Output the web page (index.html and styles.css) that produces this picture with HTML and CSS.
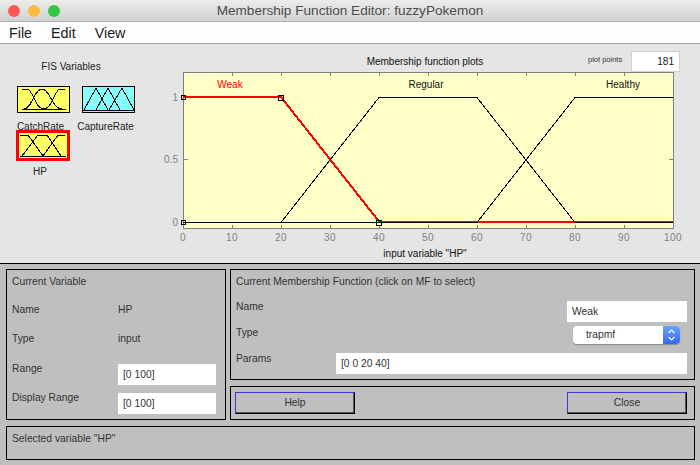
FILE: index.html
```html
<!DOCTYPE html>
<html lang="en">
<head>
	<meta charset="UTF-8">
	<title>Membership Function Editor: fuzzyPokemon</title>
	<link rel="stylesheet" href="styles.css">
</head>
<body>

<div class="titlebar">
	<div class="lights">
		<span class="light red"></span>
		<span class="light yellow"></span>
		<span class="light green"></span>
	</div>
	<div class="wintitle">Membership Function Editor: fuzzyPokemon</div>
</div>
<ul class="menubar">
	<li>File</li>
	<li>Edit</li>
	<li>View</li>
</ul>

<div class="top">
	<div class="fis">
		<div class="fis-title">FIS Variables</div>
		<div class="vars">
			<div class="tile">
				<svg class="icon yellow-icon" width="53" height="27" viewBox="0 0 51 25">
					<path class="thin crisp" d="M4 22H48M4 2H9C15 2 17 22 26 22M6 22C14 22 16 2 24 2C32 2 34 22 44 22M26 22C34 22 37 2 42 2H47"/>
				</svg>
				<div class="tile-name">CatchRate</div>
			</div>
			<div class="tile">
				<svg class="icon cyan-icon" width="53" height="27" viewBox="0 0 51 25">
					<path class="thin crisp" d="M0 23H51M1 23L13 1L25 23M13 23L25 1L37 23M26 23L39 1L51 23"/>
				</svg>
				<div class="tile-name">CaptureRate</div>
			</div>
			<div class="tile tile-hp">
				<svg class="icon yellow-icon selected" width="54" height="31" viewBox="0 0 48 25">
					<path class="thin crisp" d="M1 23H47M1 2H9L24 23M3 23L19 2H28L42 23M24 23L39 2H46"/>
				</svg>
				<div class="tile-name">HP</div>
			</div>
		</div>
	</div>

	<div class="plot">
		<div class="plot-head">
			<div class="plot-title">Membership function plots</div>
			<div class="points-label">plot points</div>
			<div class="points-box">181</div>
		</div>
		<svg class="chart" width="540" height="190" viewBox="160 70 540 190">
			<rect class="plot-bg" x="183.5" y="72.5" width="490" height="156"/>
			<path class="ticks" d="M232.5 73V76M281.5 73V76M330.5 73V76M379.5 73V76M428.5 73V76M477.5 73V76M526.5 73V76M575.5 73V76M624.5 73V76"/>
			<path class="ticks" d="M232.5 228V225M281.5 228V225M330.5 228V225M379.5 228V225M428.5 228V225M477.5 228V225M526.5 228V225M575.5 228V225M624.5 228V225"/>
			<path class="ticks" d="M184 97.5H188M184 159.5H188M184 222.5H188M673 97.5H669M673 159.5H669M673 222.5H669"/>

			<polyline class="mf-red" points="183,97 281,97 379,221.5 673,221.5"/>
			<polyline class="mf" points="281,222.5 379,97.5 477,97.5 575,222.5 673,222.5"/>
			<polyline class="mf" points="183,222.5 477,222.5 575,97.5 673,97.5"/>

			<rect class="handle" x="181.5" y="95.5" width="4" height="4"/>
			<rect class="handle" x="278.5" y="95" width="5" height="5"/>
			<rect class="handle" x="376.5" y="220.5" width="5" height="5"/>
			<rect class="handle" x="181.5" y="220.5" width="4" height="4"/>

			<text class="mf-name red-name" x="230" y="88">Weak</text>
			<text class="mf-name" x="426" y="88">Regular</text>
			<text class="mf-name" x="623" y="88">Healthy</text>

			<text class="y-num" x="178" y="101">1</text>
			<text class="y-num" x="178" y="163">0.5</text>
			<text class="y-num" x="178" y="226">0</text>

			<text class="x-num" x="183" y="241">0</text>
			<text class="x-num" x="232" y="241">10</text>
			<text class="x-num" x="281" y="241">20</text>
			<text class="x-num" x="330" y="241">30</text>
			<text class="x-num" x="379" y="241">40</text>
			<text class="x-num" x="428" y="241">50</text>
			<text class="x-num" x="477" y="241">60</text>
			<text class="x-num" x="526" y="241">70</text>
			<text class="x-num" x="575" y="241">80</text>
			<text class="x-num" x="624" y="241">90</text>
			<text class="x-num" x="673" y="241">100</text>

			<text class="mf-name" x="425" y="257">input variable "HP"</text>
		</svg>
	</div>
</div>

<div class="bottom">
	<div class="panel var-panel">
		<div class="var-row"><span>Current Variable</span></div>
		<div class="var-row"><span>Name</span><span>HP</span></div>
		<div class="var-row"><span>Type</span><span>input</span></div>
		<div class="var-row"><span class="low-label">Range</span><div class="field">[0 100]</div></div>
		<div class="var-row"><span class="low-label">Display Range</span><div class="field">[0 100]</div></div>
	</div>
	<div class="panel mf-panel">
		<div class="mf-row mf-head">Current Membership Function (click on MF to select)</div>
		<div class="mf-row name-row">
			<span>Name</span>
			<div class="field name-field">Weak</div>
		</div>
		<div class="mf-row type-row">
			<span>Type</span>
			<div class="select">
				<span class="select-text">trapmf</span>
				<span class="select-arrows">
					<svg width="9" height="14" viewBox="0 0 9 14"><path class="chevron" d="M1.5 5L4.5 2L7.500 5M1.500 9L4.500 12L7.500 9"/></svg>
				</span>
			</div>
		</div>
		<div class="mf-row params-row">
			<span>Params</span>
			<div class="field params-field">[0 0 20 40]</div>
		</div>
	</div>
	<div class="panel btn-panel">
		<div class="btn">Help</div>
		<div class="btn">Close</div>
	</div>
	<div class="panel status">Selected variable "HP"</div>
</div>

</body>
</html>
```

FILE: styles.css
```css
html, body {
	margin: 0;
	padding: 0;
}
body {
	width: 700px;
	height: 465px;
	overflow: hidden;
	font-family: "Liberation Sans", Arial, sans-serif;
	font-size: 10px;
	background-color: #e5e5e5;
}
ul {
	margin: 0;
	padding: 0;
}
li {
	list-style: none;
}

.titlebar {
	height: 21px;
	border-bottom: 1px solid #b1b1b1;
	background: linear-gradient(#ececec, #d2d2d2);
	display: flex;
	align-items: center;
	position: relative;
}
.lights {
	display: flex;
	gap: 8px;
	padding-left: 8px;
}
.light {
	width: 12px;
	height: 12px;
	border-radius: 50%;
}
.red {
	background-color: #fc5753;
}
.yellow {
	background-color: #fdbc40;
}
.green {
	background-color: #33c748;
}
.wintitle {
	position: absolute;
	left: 0;
	right: 0;
	text-align: center;
	font-size: 13.600px;
	color: #4c4c4c;
}

.menubar {
	height: 21px;
	border-bottom: 1px solid #a3a3a3;
	background-color: #fdfdfd;
	display: flex;
	align-items: center;
	gap: 19px;
	padding-left: 9px;
	font-size: 14.300px;
	color: #1a1a1a;
}

.top {
	height: 219px;
	display: flex;
	border-bottom: 1px solid #000;
}
.fis {
	width: 144px;
	padding: 16px 0 0 16px;
}
.fis-title {
	width: 110px;
	height: 14px;
	line-height: 14px;
	margin-bottom: 12px;
	text-align: center;
	color: #222;
}
.vars {
	display: grid;
	grid-template-columns: 53px 53px;
	grid-template-rows: 44px 44px;
	column-gap: 12px;
	padding-left: 1px;
}
.tile {
	display: flex;
	flex-direction: column;
	align-items: center;
}
.tile-hp {
	margin-left: -1px;
}
.icon {
	flex: none;
	display: block;
	box-sizing: border-box;
	border: 1px solid #000;
}
.yellow-icon {
	background-color: #ffff66;
}
.cyan-icon {
	background-color: #88ffff;
}
.icon.selected {
	border: 3px solid #f00;
}
.tile-name {
	height: 14px;
	line-height: 14px;
	margin: 7px 6px 0 0;
	white-space: nowrap;
	color: #222;
}
.tile-hp .tile-name {
	margin-top: 4px;
}
.thin {
	fill: none;
	stroke: #000;
	stroke-width: 1;
}
.crisp {
	shape-rendering: crispEdges;
}

.plot {
	flex: 1;
}
.plot-head {
	height: 26px;
	display: flex;
	align-items: center;
	padding: 0 0 0 123px;
}
.plot-title {
	width: 284px;
	text-align: center;
	color: #111;
	padding-top: 8px;
}
.points-label {
	width: 43px;
	margin-left: 21px;
	font-size: 7.500px;
	color: #333;
	padding-top: 4px;
}
.points-box {
	width: 49px;
	height: 21px;
	margin-top: 9px;
	box-sizing: border-box;
	padding-right: 5px;
	text-align: right;
	background-color: #fff;
	border: 1px solid #d0d0d0;
	line-height: 19px;
	color: #222;
}
.chart {
	display: block;
}
.plot-bg {
	fill: #ffffc8;
	stroke: #808080;
	stroke-width: 1;
	shape-rendering: crispEdges;
}
.ticks {
	fill: none;
	stroke: #808080;
	stroke-width: 1;
	shape-rendering: crispEdges;
}
.mf {
	fill: none;
	stroke: #000;
	stroke-width: 1;
	shape-rendering: crispEdges;
}
.mf-red {
	fill: none;
	stroke: #f00;
	stroke-width: 2;
	shape-rendering: crispEdges;
}
.handle {
	fill: none;
	stroke: #000;
	stroke-width: 1;
	shape-rendering: crispEdges;
}
.chart text {
	font-family: "Liberation Sans", Arial, sans-serif;
	font-size: 10px;
}
.mf-name {
	text-anchor: middle;
	fill: #111;
}
.red-name {
	fill: #f00;
}
.y-num {
	text-anchor: end;
	fill: #808080;
}
.x-num {
	text-anchor: middle;
	fill: #808080;
	letter-spacing: 0.5px;
}

.bottom {
	height: 201px;
	box-sizing: border-box;
	padding: 5px 0 0 6px;
	background-color: #bfbfbf;
	display: grid;
	grid-template-columns: 220px 465px;
	grid-template-rows: 111px 34px 34px;
	column-gap: 4px;
	row-gap: 6px;
	font-size: 10.300px;
	color: #333;
}
.panel {
	box-sizing: border-box;
	border: 1px solid #000;
}
.var-panel {
	grid-row: 1 / 3;
	padding: 5px 8px 0 5px;
}
.var-row {
	height: 29px;
	display: grid;
	grid-template-columns: 106px 98px;
	line-height: 14px;
}
.var-row:first-child {
	height: 14px;
	margin-bottom: 14px;
}
.var-row .field {
	margin-top: 3px;
}
.low-label {
	padding-top: 1px;
}
.field {
	height: 21px;
	line-height: 21px;
	background-color: #fff;
	padding-left: 5px;
	box-sizing: border-box;
}
.mf-panel {
	padding: 5px 7px 0 5px;
}
.mf-row {
	display: flex;
	justify-content: space-between;
}
.mf-head {
	height: 14px;
	line-height: 14px;
	margin-bottom: 12px;
}
.name-row {
	height: 21px;
	line-height: 11px;
	margin-bottom: 4px;
}
.name-field {
	width: 120px;
}
.type-row {
	height: 19px;
	line-height: 14px;
	padding-right: 7px;
	margin-bottom: 8px;
}
.params-row {
	height: 21px;
	line-height: 12px;
}
.params-field {
	width: 351px;
}
.select {
	width: 107px;
	height: 18px;
	display: flex;
	justify-content: space-between;
	background-color: #fff;
	border-radius: 4px;
	box-shadow: 0 1px 1px #8a8a8a;
	overflow: hidden;
}
.select-text {
	line-height: 18px;
	padding-left: 13px;
}
.select-arrows {
	width: 17px;
	display: flex;
	align-items: center;
	justify-content: center;
	background: linear-gradient(#6fa2ff, #2f6bf2);
}
.chevron {
	fill: none;
	stroke: #fff;
	stroke-width: 1.200;
}
.btn-panel {
	grid-column: 2;
	padding: 5px 7px 0 4px;
	display: flex;
	justify-content: space-between;
}
.btn {
	width: 120px;
	height: 22px;
	line-height: 19px;
	box-sizing: border-box;
	text-align: center;
	border-style: solid;
	border-width: 1px;
	border-color: #3a3acc #000 #000 #3a3acc;
	box-shadow: inset -1px -1px 0 #555;
}
.status {
	grid-column: 1 / 3;
	padding: 5px;
	line-height: 14px;
}
```
